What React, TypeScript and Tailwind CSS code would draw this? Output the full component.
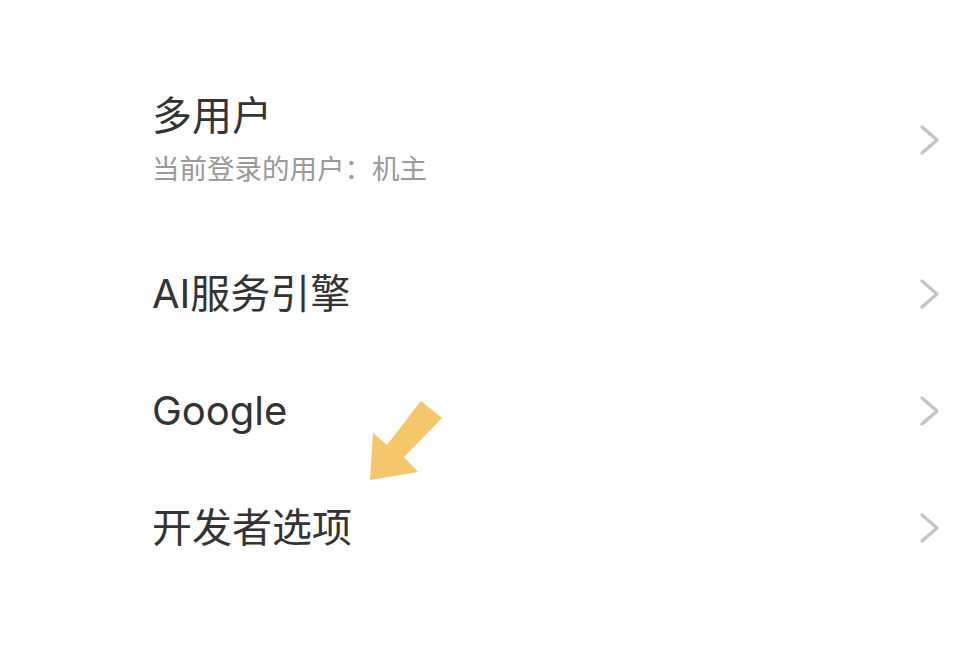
const rows = [
  { title: "多用户", sub: "当前登录的用户：机主" },
  { title: "AI服务引擎" },
  { title: "Google" },
  { title: "开发者选项" },
];

const Chevron = () => (
  <svg width="24" height="34" viewBox="0 0 24 34" fill="none">
    <path
      d="M5 4 L20 17 L5 30"
      stroke="#c4c4c4"
      strokeWidth="3.4"
      strokeLinecap="round"
      strokeLinejoin="round"
    />
  </svg>
);

export default function App() {
  return (
    <div
      className="relative w-[979px] h-[653px] bg-white overflow-hidden"
      style={{ fontFamily: 'Inter, "Noto Sans CJK SC", sans-serif' }}
    >
      <div className="pt-[44px] pl-[152px] pr-[38px]">
        {rows.map((r, i) => (
          <div
            key={r.title}
            className={`flex items-center justify-between ${i === 0 ? "h-[191px]" : "h-[117px]"}`}
          >
            <div className="flex flex-col">
              <span className="text-[40px] leading-[48px] text-[#333333]">{r.title}</span>
              {r.sub && (
                <span className="text-[27.5px] leading-[36px] text-[#999999] mt-[11px]">{r.sub}</span>
              )}
            </div>
            <Chevron />
          </div>
        ))}
      </div>

      <svg className="absolute left-0 top-0" width="979" height="653" viewBox="0 0 979 653">
        <polygon
          points="421,401 442,418 404,457 418,472 370,480 373,433 387,445"
          fill="#f5c76a"
        />
      </svg>
    </div>
  );
}
